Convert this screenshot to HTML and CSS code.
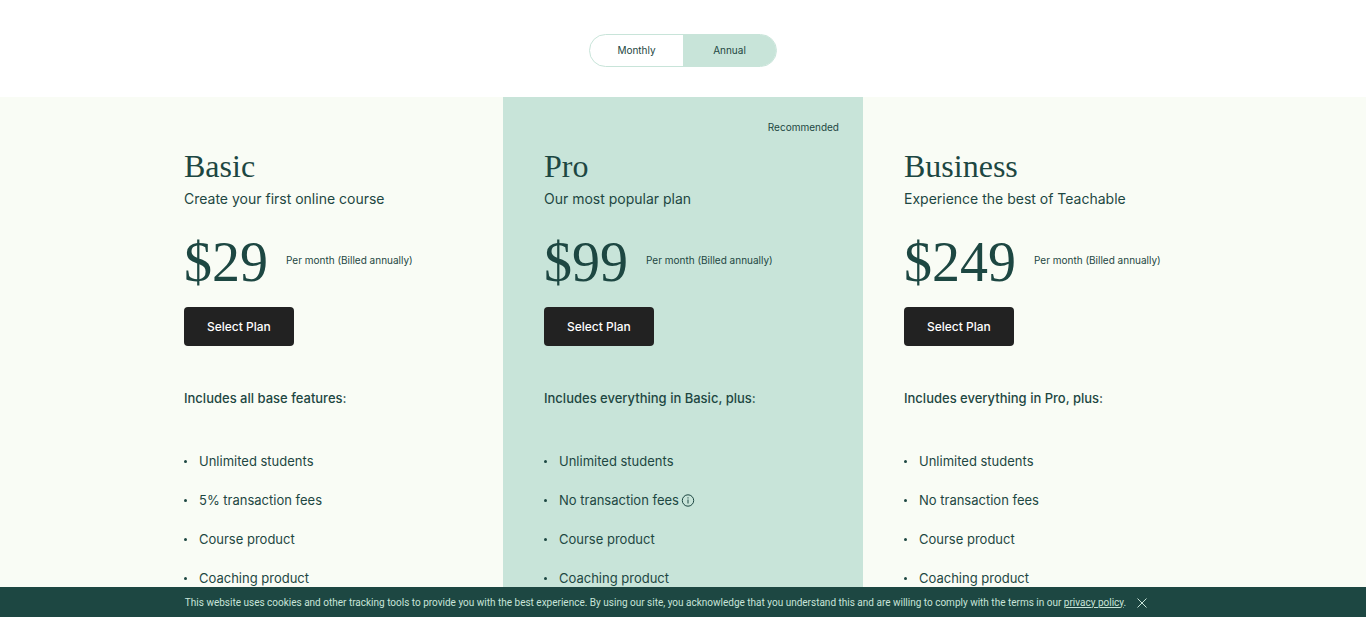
FILE: index.html
```html
<!DOCTYPE html>
<html lang="en">
<head>
<meta charset="utf-8">
<meta name="viewport" content="width=device-width, initial-scale=1">
<title>Pricing</title>
<link rel="stylesheet" href="styles.css">
</head>
<body>
<div class="page">
  <header class="billing">
    <fieldset class="toggle" aria-label="Billing period">
      <label class="toggle-option"><input type="radio" name="billing" value="monthly"><span>Monthly</span></label>
      <label class="toggle-option"><input type="radio" name="billing" value="annual" checked><span>Annual</span></label>
    </fieldset>
  </header>

  <main class="plans">
    <section class="plan">
      <p class="plan-badge"></p>
      <h2 class="plan-name">Basic</h2>
      <p class="plan-tagline">Create your first online course</p>
      <div class="plan-price"><span class="amount">$29</span><span class="period">Per month (Billed annually)</span></div>
      <button class="select-plan" type="button">Select Plan</button>
      <h3 class="plan-includes">Includes all base features:</h3>
      <ul class="features">
        <li>Unlimited students</li>
        <li>5% transaction fees</li>
        <li>Course product</li>
        <li>Coaching product</li>
      </ul>
    </section>

    <section class="plan plan-featured">
      <p class="plan-badge">Recommended</p>
      <h2 class="plan-name">Pro</h2>
      <p class="plan-tagline">Our most popular plan</p>
      <div class="plan-price"><span class="amount">$99</span><span class="period">Per month (Billed annually)</span></div>
      <button class="select-plan" type="button">Select Plan</button>
      <h3 class="plan-includes">Includes everything in Basic, plus:</h3>
      <ul class="features">
        <li>Unlimited students</li>
        <li>No transaction fees
          <button class="info" type="button" aria-label="About transaction fees">
            <svg width="14" height="14" viewBox="0 0 14 14" fill="none" stroke="currentColor"><circle cx="7" cy="7.5" r="5.7"/><path d="M7 6.5v4M7 4.3v1.2"/></svg>
          </button>
        </li>
        <li>Course product</li>
        <li>Coaching product</li>
      </ul>
    </section>

    <section class="plan">
      <p class="plan-badge"></p>
      <h2 class="plan-name">Business</h2>
      <p class="plan-tagline">Experience the best of Teachable</p>
      <div class="plan-price"><span class="amount">$249</span><span class="period">Per month (Billed annually)</span></div>
      <button class="select-plan" type="button">Select Plan</button>
      <h3 class="plan-includes">Includes everything in Pro, plus:</h3>
      <ul class="features">
        <li>Unlimited students</li>
        <li>No transaction fees</li>
        <li>Course product</li>
        <li>Coaching product</li>
      </ul>
    </section>
  </main>
</div>

<aside class="cookie-bar">
  <p>This website uses cookies and other tracking tools to provide you with the best experience. By using our site, you acknowledge that you understand this and are willing to comply with the terms in our <a href="#">privacy policy</a>.</p>
  <button class="close" type="button" aria-label="Close">
    <svg width="12" height="12" viewBox="0 0 12 12" fill="none" stroke="currentColor"><path d="M1.5 1.5l9 9M10.5 1.5l-9 9"/></svg>
  </button>
</aside>
</body>
</html>
```
FILE: styles.css
```css
* {
  box-sizing: border-box;
  margin: 0;
  padding: 0;
}

:root {
  --green: #1d4742;
  --mint: #c8e4d9;
  --cream: #f9fcf5;
}

body {
  font-family: Inter, "Liberation Sans", sans-serif;
  color: var(--green);
  background: #fff;
}

button {
  font: inherit;
  color: inherit;
  border: 0;
  background: none;
  cursor: pointer;
}

.page {
  display: flex;
  flex-direction: column;
  min-height: 100vh;
}

.billing {
  display: flex;
  justify-content: center;
  padding: 34px 16px 30px;
}

.toggle {
  display: grid;
  grid-template-columns: 1fr 1fr;
  width: 188px;
  border: 1px solid var(--mint);
  border-radius: 17px;
  overflow: hidden;
}

.toggle-option {
  font-size: 10px;
  line-height: 31px;
  text-align: center;
  cursor: pointer;
}

.toggle-option input {
  position: absolute;
  opacity: 0;
}

.toggle-option:has(input:checked) {
  background: var(--mint);
}

.plans {
  flex: 1;
  display: grid;
  grid-template-columns: repeat(3, minmax(0, 360px));
  justify-content: center;
  background: var(--cream);
}

.plan {
  padding: 20px 24px 20px 41px;
}

.plan-featured {
  background: var(--mint);
}

.plan-badge {
  height: 20px;
  margin-bottom: 9px;
  font-size: 10px;
  line-height: 20px;
  text-align: right;
}

.plan-name {
  font-family: "Liberation Serif", serif;
  font-size: 32px;
  font-weight: 400;
  line-height: 40px;
}

.plan-tagline {
  margin-top: 1px;
  font-size: 14px;
  line-height: 24px;
}

.plan-price {
  display: flex;
  align-items: center;
  gap: 18px;
  margin: 19px 0 13px;
}

.amount {
  font-family: "Liberation Serif", serif;
  font-size: 56px;
  line-height: 64px;
}

.period {
  padding-bottom: 5px;
  font-size: 10px;
  line-height: 16px;
}

.select-plan {
  display: block;
  padding: 0 23px;
  border-radius: 4px;
  background: #222;
  color: #fff;
  font-size: 12px;
  font-weight: 500;
  line-height: 39px;
}

.plan-includes {
  margin: 40px 0 39px;
  font-size: 13px;
  font-weight: 500;
  line-height: 24px;
}

.features {
  display: grid;
  gap: 15px;
  list-style: none;
  font-size: 13px;
  line-height: 24px;
}

.features li {
  display: flex;
  align-items: center;
}

.features li::before {
  content: "";
  width: 3px;
  height: 3px;
  margin-right: 12px;
  border-radius: 50%;
  background: currentColor;
}

.info {
  display: flex;
  margin-left: 2px;
}

.cookie-bar {
  position: fixed;
  inset: auto 0 0;
  display: flex;
  align-items: center;
  justify-content: center;
  gap: 10px;
  min-height: 30px;
  padding: 1px 33px 0 0;
  background: var(--green);
  color: #c8e4d9;
  font-family: Roboto, "Liberation Sans", sans-serif;
  font-size: 10px;
  line-height: 16px;
}

.cookie-bar a {
  color: inherit;
}

.close {
  display: flex;
}
```
